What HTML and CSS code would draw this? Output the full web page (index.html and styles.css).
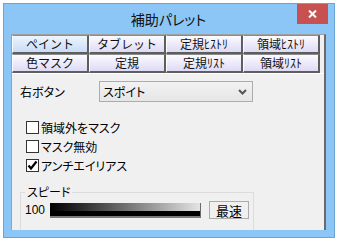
FILE: index.html
```html
<!DOCTYPE html>
<html lang="ja">
<head>
<meta charset="utf-8">
<link rel="stylesheet" href="styles.css">
</head>
<body>
<div class="window">
  <div class="titlebar">
    <span class="title">補助パレット</span>
    <span class="close"><svg width="9" height="8" viewBox="0 0 9 8"><path d="M1 0.5 L8 7.5 M8 0.5 L1 7.5" stroke="#fff" stroke-width="2"/></svg></span>
  </div>
  <div class="client">
    <div class="tabs">
      <div class="tab active">ペイント</div>
      <div class="tab">タブレット</div>
      <div class="tab">定規ﾋｽﾄﾘ</div>
      <div class="tab">領域ﾋｽﾄﾘ</div>
      <div class="tab">色マスク</div>
      <div class="tab">定規</div>
      <div class="tab">定規ﾘｽﾄ</div>
      <div class="tab">領域ﾘｽﾄ</div>
    </div>
    <div class="panel">
      <div class="select-row">
        <span class="label">右ボタン</span>
        <div class="select">
          <span>スポイト</span>
          <svg width="9" height="6" viewBox="0 0 9 6"><path d="M1 1 L4.5 4.5 L8 1" fill="none" stroke="#555" stroke-width="2"/></svg>
        </div>
      </div>
      <div class="checks">
        <div class="check"><span class="box"></span><span>領域外をマスク</span></div>
        <div class="check"><span class="box"></span><span>マスク無効</span></div>
        <div class="check"><span class="box"><svg width="11" height="11" viewBox="0 0 11 11"><path d="M1.5 5.5 L4 8.5 L9.5 1.5" fill="none" stroke="#000" stroke-width="2.2"/></svg></span><span>アンチエイリアス</span></div>
      </div>
      <fieldset class="group">
        <legend>スピード</legend>
        <div class="speed">
          <span class="num">100</span>
          <div class="bar"></div>
          <div class="btn">最速</div>
        </div>
      </fieldset>
    </div>
  </div>
</div>
</body>
</html>
```
FILE: styles.css
```css
* { box-sizing: border-box; }
html, body { margin: 0; padding: 0; background: #fff; }
body {
  font-family: "Noto Sans CJK JP", "Noto Sans", sans-serif;
  font-size: 12px;
  color: #000;
}
.window {
  margin: 3px 0 0 3px;
  width: 332px;
  height: 235px;
  border: 1px solid #6da4d6;
  background: #8bc6f6;
  padding: 0 8px 7px 7px;
}
.titlebar {
  height: 30px;
  display: grid;
  grid-template-columns: 1fr auto 1fr;
  align-items: start;
}
.title {
  grid-column: 2;
  font-size: 14px;
  line-height: 30px;
  font-feature-settings: "palt";
  color: #111;
}
.close {
  grid-column: 3;
  justify-self: end;
  margin-right: -2px;
  width: 31px;
  height: 20px;
  background: #c75050;
  display: flex;
  align-items: center;
  justify-content: center;
}
.client {
  height: 196px;
  background: #f0f0f0;
  border-top: 1px solid #a0a0a0;
  border-left: 1px solid #a0a0a0;
  border-right: 2px solid #6a6a6a;
  overflow: hidden;
}
.tabs {
  display: grid;
  grid-template-columns: repeat(4, 77px);
  grid-auto-rows: 19px;
}
.tab {
  border-top: 1px solid #8c8c8c;
  border-left: 1px solid #fcfcfc;
  border-right: 2px solid #5e5e5e;
  border-bottom: 2px solid #5e5e5e;
  background: linear-gradient(#fbfbff, #dedaf5);
  display: flex;
  align-items: center;
  justify-content: center;
  line-height: 16px;
  color: #111;
}
.tab.active {
  background: linear-gradient(#eef5fd, #c8dcf6);
}
.panel {
  border-top: 1px solid #fff;
  padding: 7px 0 0 8px;
}
.select-row {
  display: flex;
  align-items: center;
  height: 21px;
}
.label {
  width: 79px;
  font-feature-settings: "palt";
}
.select {
  width: 154px;
  height: 21px;
  border: 1px solid #acacac;
  background: linear-gradient(#f2f2f2, #e6e6e6);
  display: flex;
  align-items: center;
  justify-content: space-between;
  padding: 0 5px 0 3px;
  font-feature-settings: "palt";
}
.checks {
  margin-top: 16px;
  padding-left: 6px;
}
.check {
  height: 19px;
  display: flex;
  align-items: center;
  font-feature-settings: "palt";
}
.box {
  width: 13px;
  height: 13px;
  border: 1px solid #333;
  background: #fff;
  margin-right: 2px;
  display: flex;
  align-items: center;
  justify-content: center;
}
.group {
  margin: 9px 0 0 0;
  width: 234px;
  height: 80px;
  border: 1px solid #dcdcdc;
  padding: 0 0 0 4px;
  min-width: 0;
}
.group legend {
  padding: 0 2px;
  line-height: 16px;
  font-feature-settings: "palt";
}
.speed {
  margin-top: 1px;
  height: 18px;
  display: flex;
  align-items: center;
}
.num {
  width: 25px;
  font-family: "Liberation Sans", Arial, sans-serif;
  font-size: 12px;
}
.bar {
  width: 151px;
  height: 15px;
  border-right: 1px solid #6a6a6a;
  border-bottom: 2px solid #7a7a7a;
  background:
    linear-gradient(to bottom, transparent 62%, #000 62%),
    linear-gradient(to right, #000 0%, #2a2a2a 20%, #e4e4e4 100%);
}
.btn {
  margin-left: 8px;
  width: 40px;
  height: 18px;
  border: 1px solid #acacac;
  background: #f0f0f0;
  display: flex;
  align-items: center;
  justify-content: center;
  font-size: 13px;
}
```
